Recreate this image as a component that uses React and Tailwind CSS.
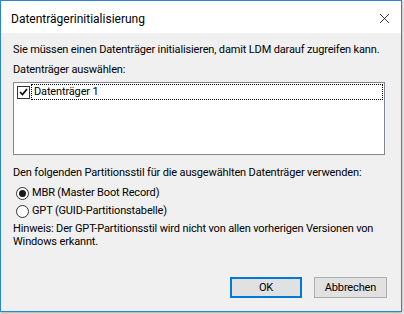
import { X } from "lucide-react"

const font = { fontFamily: 'Roboto, "Liberation Sans", Arial, sans-serif' }

export default function App() {
  return (
    <div className="w-[404px] h-[314px] bg-[#f3f3f3]" style={font}>
      <div className="w-[402px] h-[312px] border border-[#2b84d4] bg-[#f0f0f0] flex flex-col shadow-[0_1px_3px_rgba(0,0,0,0.35)] text-[11px] text-black leading-[14px] tracking-[-0.15px]">
        {/* Title bar */}
        <div className="h-[32px] bg-white flex items-center justify-between pl-[10px] pr-[8px] pt-[3px]">
          <span className="text-[12px] tracking-normal">Datenträgerinitialisierung</span>
          <X className="w-[17px] h-[17px] text-black" strokeWidth={1.1} />
        </div>

        {/* Body */}
        <div className="flex flex-col px-[12px] flex-1">
          <p className="mt-[10px] whitespace-nowrap">Sie müssen einen Datenträger initialisieren, damit LDM darauf zugreifen kann.</p>
          <p className="mt-[6px]">Datenträger auswählen:</p>
          <div className="mt-[5px] w-[372px] h-[73px] bg-white border border-[#828790] p-[1px]">
            <div className="flex items-center h-[16px]">
              <span className="ml-[2px] w-[13px] h-[13px] border border-[#333] bg-white flex items-center justify-center">
                <svg width="9" height="8" viewBox="0 0 9 8">
                  <path d="M1 4 L3.5 6.5 L8 1" fill="none" stroke="#000" strokeWidth="1.6" />
                </svg>
              </span>
              <span className="ml-[1px] flex-1 h-[16px] border border-dotted border-black pl-[2px] leading-[14px]">
                Datenträger 1
              </span>
            </div>
          </div>

          <p className="mt-[11px] whitespace-nowrap">Den folgenden Partitionsstil für die ausgewählten Datenträger verwenden:</p>
          <div className="mt-[5px] flex items-center h-[16px] pl-[3px]">
            <span className="w-[13px] h-[13px] rounded-full border border-[#333] bg-white flex items-center justify-center">
              <span className="w-[7px] h-[7px] rounded-full bg-[#1a1a1a]" />
            </span>
            <span className="ml-[3px]">MBR (Master Boot Record)</span>
          </div>
          <div className="mt-[2px] flex items-center h-[16px] pl-[3px]">
            <span className="w-[13px] h-[13px] rounded-full border border-[#333] bg-white" />
            <span className="ml-[3px]">GPT (GUID-Partitionstabelle)</span>
          </div>
          <p className="mt-[3px] leading-[13px] w-[372px]">
            Hinweis: Der GPT-Partitionsstil wird nicht von allen vorherigen Versionen von Windows erkannt.
          </p>

          <div className="mt-auto mb-[13px] flex justify-end gap-[12px] pr-[2px]">
            <button className="w-[72px] h-[21px] bg-[#e1e1e1] border-2 border-[#0078d7] flex items-center justify-center">OK</button>
            <button className="w-[73px] h-[21px] bg-[#e1e1e1] border border-[#adadad] flex items-center justify-center">Abbrechen</button>
          </div>
        </div>
      </div>
    </div>
  )
}
